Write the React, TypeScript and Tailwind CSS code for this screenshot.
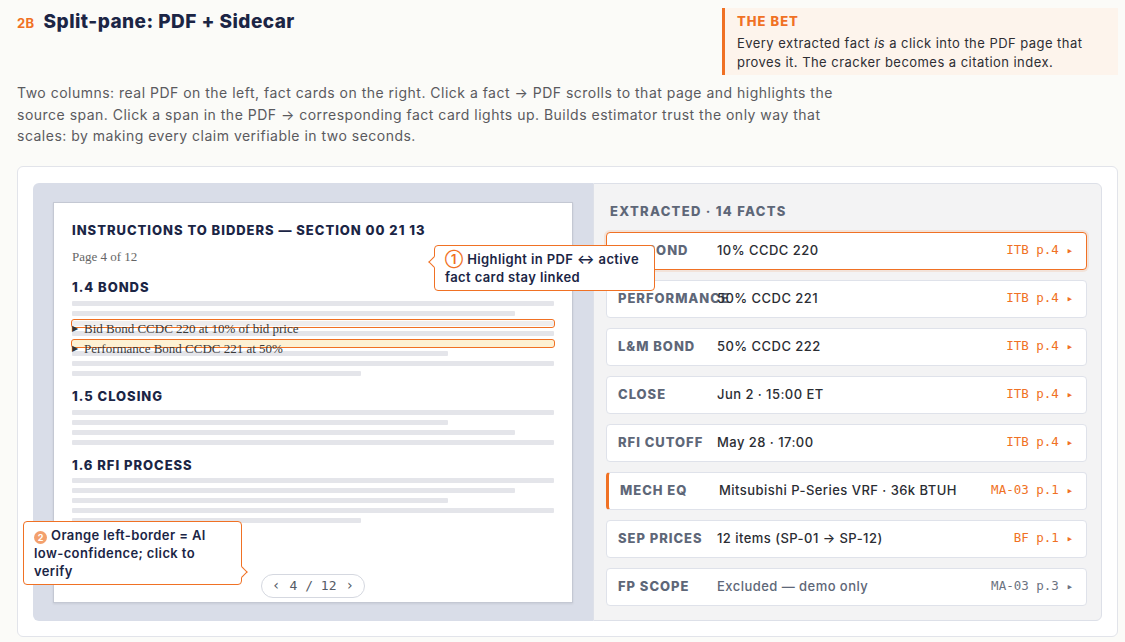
import React from "react";

type Fact = {
  label: string;
  value: string;
  cite: string;
  active?: boolean;
  lowConfidence?: boolean;
  muted?: boolean;
};

const facts: Fact[] = [
  { label: "BID BOND", value: "10% CCDC 220", cite: "ITB p.4", active: true },
  { label: "PERFORMANCE", value: "50% CCDC 221", cite: "ITB p.4" },
  { label: "L&M BOND", value: "50% CCDC 222", cite: "ITB p.4" },
  { label: "CLOSE", value: "Jun 2 · 15:00 ET", cite: "ITB p.4" },
  { label: "RFI CUTOFF", value: "May 28 · 17:00", cite: "ITB p.4" },
  { label: "MECH EQ", value: "Mitsubishi P-Series VRF · 36k BTUH", cite: "MA-03 p.1", lowConfidence: true },
  { label: "SEP PRICES", value: "12 items (SP-01 → SP-12)", cite: "BF p.1" },
  { label: "FP SCOPE", value: "Excluded — demo only", cite: "MA-03 p.3", muted: true },
];

// placeholder text lines on the fake PDF page
function Bars({ widths }: { widths: string[] }) {
  return (
    <div className="flex flex-col gap-[5px]">
      {widths.map((w, i) => (
        <div key={i} className={`h-[5px] rounded-[1px] bg-[#e4e5ea] ${w}`} />
      ))}
    </div>
  );
}

function SectionHeading({ children, className = "" }: { children: React.ReactNode; className?: string }) {
  return (
    <h3 className={`text-[13px] leading-[18px] font-extrabold tracking-[0.075em] text-[#1b2545] ${className}`}>
      {children}
    </h3>
  );
}

function PdfLine({ children, top }: { children: React.ReactNode; top: string }) {
  return (
    <div
      className={`absolute left-0 ${top} flex items-center gap-[6px] font-['Liberation_Serif',serif] text-[13px] leading-[16px] text-[#3a3a3a]`}
    >
      <span className="text-[8px] text-[#333]">▶</span>
      {children}
    </div>
  );
}

function FactCard({ fact }: { fact: Fact }) {
  const border = fact.active
    ? "border-[#f07124] shadow-[0_0_0_2px_rgba(240,113,36,0.12)]"
    : fact.lowConfidence
    ? "border-[#dfe2ea] border-l-[3px] border-l-[#f07124]"
    : "border-[#dfe2ea]";
  return (
    <div className={`flex h-[38px] items-center rounded-[4px] border bg-white pl-[11px] pr-[13px] ${border}`}>
      <div className="w-[99px] shrink-0 whitespace-nowrap text-[13px] font-extrabold tracking-[0.075em] text-[#5e6778]">
        {fact.label}
      </div>
      <div
        className={`flex-1 whitespace-nowrap text-[13px] font-medium tracking-[0.035em] ${
          fact.muted ? "text-[#5e6778]" : "text-[#2b2d33]"
        }`}
      >
        {fact.value}
      </div>
      <div
        className={`whitespace-nowrap font-['DejaVu_Sans_Mono',monospace] text-[12.5px] ${
          fact.muted ? "text-[#6b7280]" : "text-[#f07124]"
        }`}
      >
        {fact.cite} <span className="text-[11px]">▸</span>
      </div>
    </div>
  );
}

export default function App() {
  return (
    <div className="min-h-screen bg-[#fbfbf8] pl-[17px] pr-[7px] pt-[8px] font-['Inter',sans-serif]">
      {/* Header */}
      <div className="flex items-start justify-between">
        <div className="flex items-baseline gap-[9px] pt-[2px]">
          <span className="text-[13px] font-bold tracking-[0.03em] text-[#f07124]">2B</span>
          <h1 className="text-[19px] leading-[24px] font-extrabold tracking-[0.024em] text-[#1b2545]">
            Split-pane: PDF + Sidecar
          </h1>
        </div>
        <div className="w-[396px] border-l-[3px] border-[#f07124] bg-[#fdf4ec] pb-[3px] pl-[12px] pr-[8px] pt-[4px]">
          <div className="text-[13px] leading-[18px] font-extrabold tracking-[0.08em] text-[#f07124]">THE BET</div>
          <p className="mt-[4px] text-[13px] leading-[19px] tracking-[0.035em] text-[#2e2e33]">
            Every extracted fact <em>is</em> a click into the PDF page that proves it. The cracker becomes a citation
            index.
          </p>
        </div>
      </div>

      <p className="mt-[7px] max-w-[830px] text-[14px] leading-[21.5px] tracking-[0.035em] text-[#5a5a5e]">
        Two columns: real PDF on the left, fact cards on the right. Click a fact → PDF scrolls to that page and
        highlights the source span. Click a span in the PDF → corresponding fact card lights up. Builds estimator
        trust the only way that scales: by making every claim verifiable in two seconds.
      </p>

      {/* Demo card */}
      <div className="mt-[19px] rounded-[6px] border border-[#e2e4ea] bg-white px-[15px] pb-[15px] pt-[16px]">
        <div className="relative flex h-[438px]">
          {/* PDF pane */}
          <div className="flex w-[560px] shrink-0 rounded-l-[6px] bg-[#d9dde8] pb-[18px] pl-[20px] pr-[20px] pt-[19px]">
            <div className="flex flex-1 flex-col border border-[#c4c8d3] bg-white px-[18px] pt-[18px] shadow-[0_1px_2px_rgba(0,0,0,0.08)]">
              <SectionHeading>INSTRUCTIONS TO BIDDERS — SECTION 00 21 13</SectionHeading>
              <div className="mt-[10px] font-['Liberation_Serif',serif] text-[13px] leading-[16px] text-[#666]">
                Page 4 of 12
              </div>

              <SectionHeading className="mt-[13px]">1.4 BONDS</SectionHeading>
              <div className="relative mt-[5px]">
                <Bars widths={["w-full", "w-[92%]", "w-full", "w-full", "w-full", "w-[78%]", "w-full", "w-[60%]"]} />
                <div className="absolute left-[-1px] right-[-1px] top-[18px] h-[9px] rounded-[3px] border-[1.5px] border-[#f07124] bg-[#fffaf2]/40" />
                <div className="absolute left-[-1px] right-[-1px] top-[38px] h-[9px] rounded-[3px] border-[1.5px] border-[#f07124] bg-[#fdf1d3]" />
                <PdfLine top="top-[20px]">Bid Bond CCDC 220 at 10% of bid price</PdfLine>
                <PdfLine top="top-[40px]">Performance Bond CCDC 221 at 50%</PdfLine>
              </div>

              <SectionHeading className="mt-[11px]">1.5 CLOSING</SectionHeading>
              <div className="mt-[5px]">
                <Bars widths={["w-full", "w-[78%]", "w-[92%]", "w-full"]} />
              </div>

              <SectionHeading className="mt-[11px]">1.6 RFI PROCESS</SectionHeading>
              <div className="mt-[4px]">
                <Bars widths={["w-full", "w-[92%]", "w-[78%]", "w-full", "w-[60%]"]} />
              </div>

              <div className="mb-[4px] mt-auto flex h-[24px] items-center gap-[9px] self-center rounded-full border border-[#d5d8e0] px-[10px] font-['DejaVu_Sans_Mono',monospace] text-[13px] text-[#555b66]">
                <span className="text-[14px]">‹</span>
                <span>4 / 12</span>
                <span className="text-[14px]">›</span>
              </div>
            </div>
          </div>

          {/* Sidecar */}
          <div className="flex-1 rounded-r-[6px] border border-[#dde0e8] bg-[#f3f3f4] pl-[12px] pr-[14px] pt-[18px]">
            <div className="pl-[4px] text-[13px] leading-[18px] font-extrabold tracking-[0.1em] text-[#5e6778]">
              EXTRACTED · 14 FACTS
            </div>
            <div className="mt-[12px] flex flex-col gap-[10px]">
              {facts.map((f) => (
                <FactCard key={f.label} fact={f} />
              ))}
            </div>
          </div>

          {/* Callout 1 */}
          <div className="absolute left-[401px] top-[62px] z-10 w-[221px] rounded-[4px] border border-[#f07124] bg-white py-[4px] pl-[10px] pr-[8px] text-[13px] leading-[18px] font-semibold tracking-[0.03em] text-[#1b2545]">
            <div className="absolute left-[-5px] top-[12px] h-[8px] w-[8px] rotate-45 border-b border-l border-[#f07124] bg-white" />
            <span className="text-[#f07124]">①</span> Highlight in PDF ↔ active fact card stay linked
          </div>

          {/* Callout 2 */}
          <div className="absolute left-[-10px] top-[338px] z-10 w-[219px] rounded-[4px] border border-[#f07124] bg-white py-[4px] pl-[10px] pr-[14px] text-[13px] leading-[18px] font-semibold tracking-[0.03em] text-[#1b2545]">
            <div className="absolute right-[-5px] top-[46px] h-[8px] w-[8px] rotate-45 border-r border-t border-[#f07124] bg-white" />
            <span className="mr-[4px] inline-flex h-[13px] w-[13px] items-center justify-center rounded-full bg-[#f3a06d] align-[-1px] text-[9px] font-bold tracking-normal text-white">
              2
            </span>
            Orange left-border = AI low-confidence; click to verify
          </div>
        </div>
      </div>
    </div>
  );
}
